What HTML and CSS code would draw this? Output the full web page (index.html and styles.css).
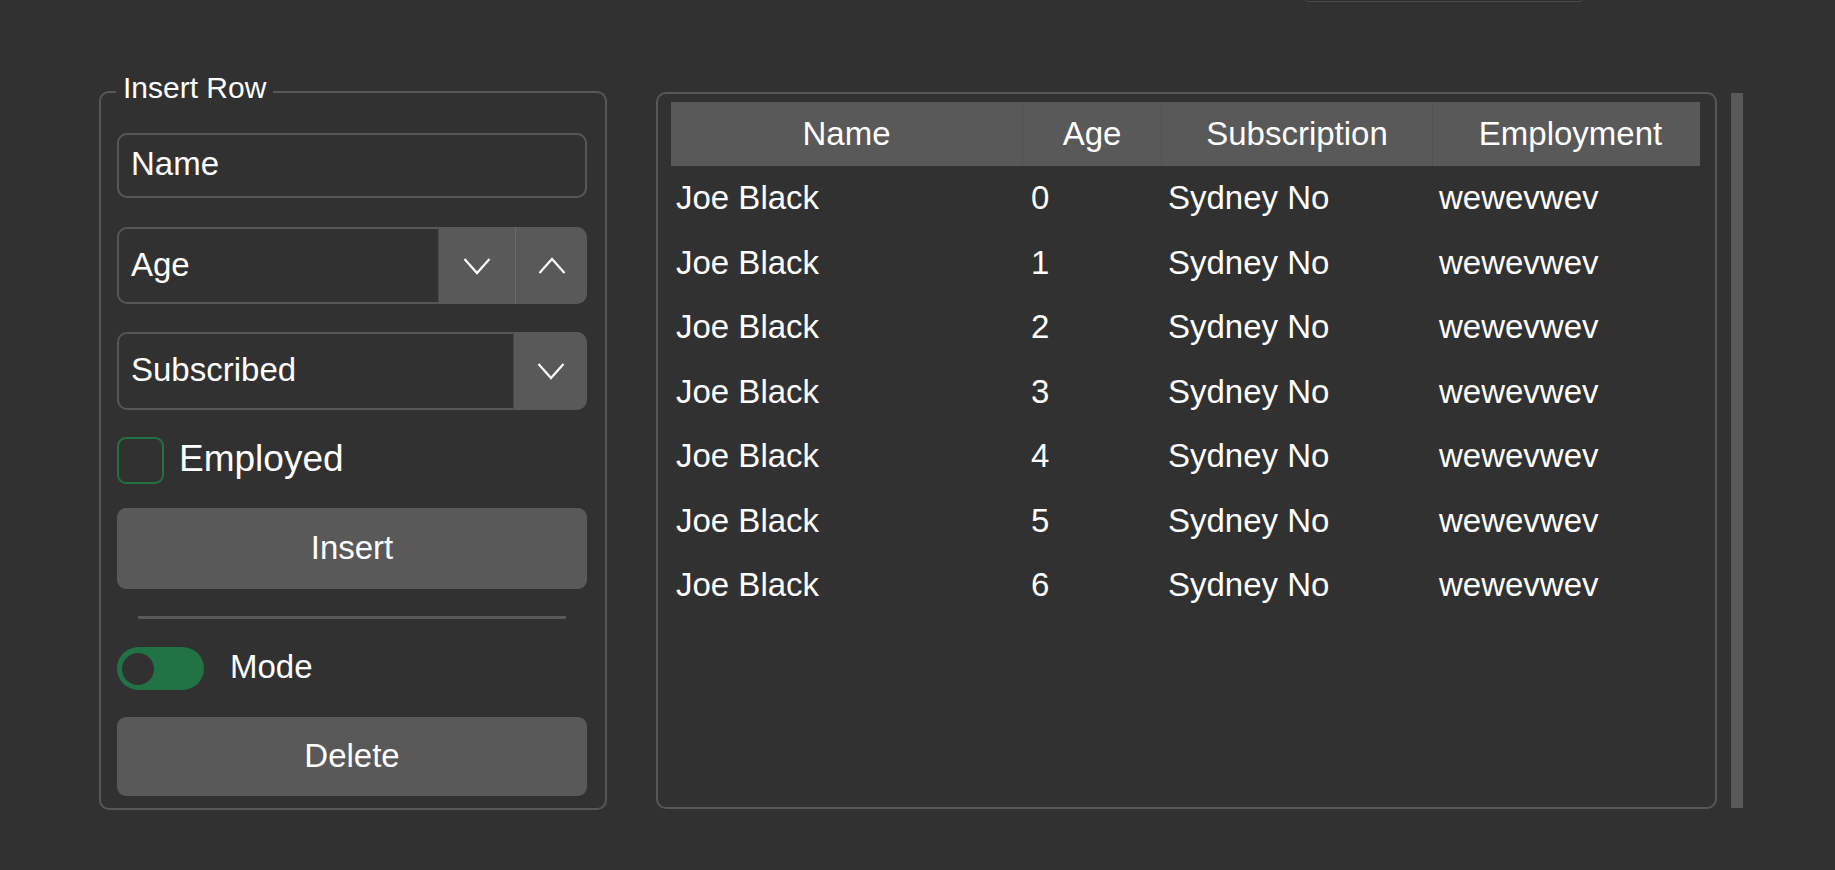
FILE: index.html
```html
<!DOCTYPE html>
<html lang="en">
<head>
<meta charset="utf-8">
<title>Insert Row</title>
<link rel="stylesheet" href="styles.css">
</head>
<body>
<div class="popup-edge"></div>
<main class="app">
  <fieldset class="group">
    <legend class="group-title">Insert Row</legend>
    <div class="entry"><span>Name</span></div>
    <div class="spinbox">
      <div class="field"><span>Age</span></div>
      <div class="arrow-btn">
        <svg class="chev" viewBox="0 0 28 18" width="28" height="18"><polyline points="1.5,2 14,16 26.5,2"/></svg>
      </div>
      <div class="arrow-btn arrow-last arrow-split">
        <svg class="chev" viewBox="0 0 28 18" width="28" height="18"><polyline points="1.5,16 14,2 26.5,16"/></svg>
      </div>
    </div>
    <div class="combo">
      <div class="field"><span>Subscribed</span></div>
      <div class="arrow-btn arrow-last">
        <svg class="chev" viewBox="0 0 28 18" width="28" height="18"><polyline points="1.5,2 14,16 26.5,2"/></svg>
      </div>
    </div>
    <div class="check-row">
      <span class="checkbox"></span>
      <span class="check-label">Employed</span>
    </div>
    <div class="button btn-insert">Insert</div>
    <div class="separator"></div>
    <div class="switch-row">
      <span class="switch"><span class="knob"></span></span>
      <span class="switch-label">Mode</span>
    </div>
    <div class="button btn-delete">Delete</div>
  </fieldset>

  <section class="tree-frame">
    <div class="tree">
      <div class="th">Name</div>
      <div class="th">Age</div>
      <div class="th">Subscription</div>
      <div class="th th-last">Employment</div>

      <div class="td c-name">Joe Black</div><div class="td c-age">0</div><div class="td c-sub">Sydney No</div><div class="td c-emp">wewevwev</div>
      <div class="td c-name">Joe Black</div><div class="td c-age">1</div><div class="td c-sub">Sydney No</div><div class="td c-emp">wewevwev</div>
      <div class="td c-name">Joe Black</div><div class="td c-age">2</div><div class="td c-sub">Sydney No</div><div class="td c-emp">wewevwev</div>
      <div class="td c-name">Joe Black</div><div class="td c-age">3</div><div class="td c-sub">Sydney No</div><div class="td c-emp">wewevwev</div>
      <div class="td c-name">Joe Black</div><div class="td c-age">4</div><div class="td c-sub">Sydney No</div><div class="td c-emp">wewevwev</div>
      <div class="td c-name">Joe Black</div><div class="td c-age">5</div><div class="td c-sub">Sydney No</div><div class="td c-emp">wewevwev</div>
      <div class="td c-name">Joe Black</div><div class="td c-age">6</div><div class="td c-sub">Sydney No</div><div class="td c-emp">wewevwev</div>
    </div>
  </section>

  <div class="scrollbar"></div>
</main>
</body>
</html>
```

FILE: styles.css
```css
* {
  box-sizing: border-box;
}

html,
body {
  margin: 0;
  height: 100%;
}

body {
  position: relative;
  overflow: hidden;
  background: #313131;
  color: #ffffff;
  font-family: "Liberation Sans", Arial, sans-serif;
  font-size: 33px;
}

.popup-edge {
  position: absolute;
  left: 1303px;
  top: -12px;
  width: 282px;
  height: 14px;
  background: #2b2b2b;
  border: 1px solid #484d53;
  border-radius: 6px;
}

.app {
  display: flex;
  align-items: flex-start;
  padding: 71px 0 0 99px;
}

/* ---------- left group ---------- */
.group {
  margin: 0;
  width: 508px;
  min-width: 0;
  border: 2px solid #575757;
  border-radius: 10px;
  padding: 21px 18px 12px 16px;
}

.group-title {
  font-size: 30px;
  line-height: 34px;
  padding: 0 7px 7px;
  margin-left: -1px;
}

.entry {
  height: 65px;
  border: 2px solid #575757;
  border-radius: 10px;
  padding-left: 12px;
  padding-bottom: 3px;
  display: flex;
  align-items: center;
}

.spinbox,
.combo {
  display: flex;
}

.spinbox {
  margin-top: 29px;
  height: 77px;
}

.combo {
  margin-top: 28px;
  height: 78px;
}

.field {
  flex: 1;
  display: flex;
  align-items: center;
  padding-left: 12px;
  padding-bottom: 2px;
  border: 2px solid #575757;
  border-right: 1px solid #4a4a4a;
  border-radius: 10px 0 0 10px;
}

.arrow-btn {
  width: 76px;
  background: #595959;
  display: flex;
  align-items: center;
  justify-content: center;
}

.arrow-split {
  width: 72px;
  border-left: 1px solid #6a6a6a;
}

.combo .arrow-btn {
  width: 73px;
}

.arrow-last {
  border-radius: 0 10px 10px 0;
}

.chev {
  display: block;
  fill: none;
  stroke: #ffffff;
  stroke-width: 2.2;
}

.check-row {
  margin-top: 27px;
  height: 47px;
  display: flex;
  align-items: center;
  gap: 15px;
}

.checkbox {
  width: 47px;
  height: 47px;
  border: 2px solid #217346;
  border-radius: 9px;
}

.check-label {
  font-size: 37px;
  padding-bottom: 3px;
}

.button {
  background: #595959;
  border-radius: 9px;
  display: flex;
  align-items: center;
  justify-content: center;
  padding-bottom: 2px;
}

.btn-insert {
  margin-top: 24px;
  height: 81px;
}

.separator {
  margin: 27px 21px 0;
  height: 3px;
  background: #595959;
}

.switch-row {
  margin-top: 28px;
  height: 43px;
  display: flex;
  align-items: center;
  gap: 26px;
}

.switch {
  width: 87px;
  height: 43px;
  border-radius: 22px;
  background: #217346;
  display: flex;
  align-items: center;
  padding-left: 5px;
}

.knob {
  width: 32px;
  height: 32px;
  border-radius: 50%;
  background: #313131;
}

.switch-label {
  padding-bottom: 3px;
}

.btn-delete {
  margin-top: 27px;
  height: 79px;
}

/* ---------- tree ---------- */
.tree-frame {
  margin: 21px 0 0 49px;
  width: 1061px;
  height: 717px;
  border: 2px solid #575757;
  border-radius: 10px;
  padding: 8px 15px 0 13px;
}

.tree {
  display: grid;
  grid-template-columns: 352px 139px 271px 267px;
  grid-template-rows: 64px;
  grid-auto-rows: 64.5px;
}

.th {
  background: #595959;
  border-right: 1px solid #525252;
  display: flex;
  align-items: center;
  justify-content: center;
  white-space: nowrap;
}

.th-last {
  border-right: none;
  padding-left: 8px;
}

.td {
  display: flex;
  align-items: center;
  white-space: nowrap;
}

.c-name {
  padding-left: 5px;
}

.c-age {
  padding-left: 8px;
}

.c-sub,
.c-emp {
  padding-left: 6px;
}

.scrollbar {
  margin: 22px 0 0 14px;
  width: 12px;
  height: 715px;
  background: #595959;
}
```
